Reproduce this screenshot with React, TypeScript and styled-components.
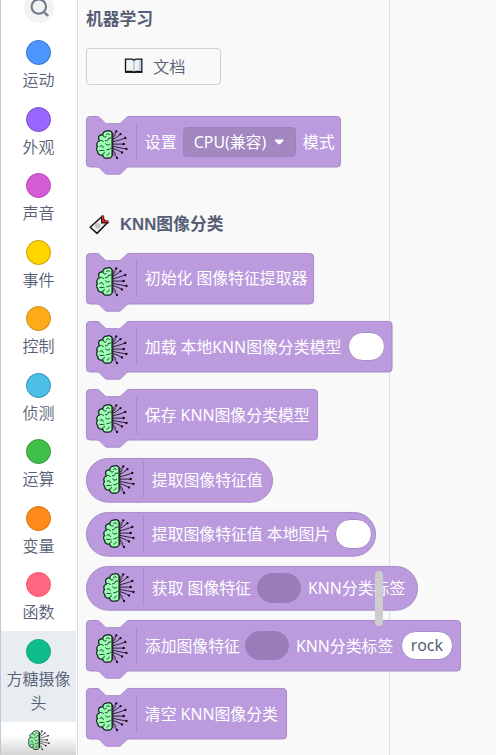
import React from 'react';
import styled, { createGlobalStyle } from 'styled-components';

const GlobalStyle = createGlobalStyle`
  * { box-sizing: border-box; }
  body { margin: 0; background: #f9f9f9; overflow: hidden; }
`;

const Screen = styled.div`
  display: flex;
  width: 496px;
  height: 755px;
  overflow: hidden;
  background: #f9f9f9;
  color: #575e75;
  font-family: 'Noto Sans', 'Noto Sans CJK SC', sans-serif;
`;

const Sidebar = styled.nav`
  position: relative;
  flex: none;
  display: flex;
  flex-direction: column;
  align-items: stretch;
  width: 77px;
  height: 755px;
  padding-right: 1px;
  border-left: 1px solid #bccbdc;
  background: #fff;
  overflow: hidden;
`;

const SearchButton = styled.div`
  flex: none;
  width: 30px;
  height: 30px;
  margin: -7px auto 9.5px 23px;
  border-radius: 50%;
  background: #f3f3f3;
`;

const Category = styled.div<{ $selected?: boolean }>`
  flex: none;
  display: flex;
  flex-direction: column;
  align-items: center;
  min-height: ${p => (p.$selected ? 91 : 66.5)}px;
  padding: 7.5px 4px 1px;
  background: ${p => (p.$selected ? '#e8edf1' : 'transparent')};
  font-family: 'Noto Sans CJK SC', sans-serif;
  font-size: 16px;
  font-weight: 350;
  line-height: 24.5px;
  text-align: center;
`;

const Bubble = styled.span<{ $color: string; $edge: string }>`
  flex: none;
  width: 25px;
  height: 25px;
  margin-bottom: 2px;
  border: 1px solid ${p => p.$edge};
  border-radius: 50%;
  background: ${p => p.$color};
`;

const CategoryName = styled.span`
  width: 66px;
`;

const BottomFade = styled.div`
  position: absolute;
  left: 0;
  right: 1px;
  bottom: 0;
  height: 20px;
  background: linear-gradient(rgba(0, 0, 0, 0), rgba(0, 0, 0, 0.17));
`;

const Flyout = styled.main`
  position: relative;
  flex: none;
  width: 313px;
  height: 755px;
  padding: 7px 0 0 8px;
  border-left: 1px solid #d9d9d9;
  border-right: 1px solid #dddddd;
`;

const Heading = styled.h2`
  display: flex;
  align-items: center;
  height: 26px;
  margin: 0;
  font: bold 16.8px/26px 'Liberation Sans', 'Noto Sans CJK SC', sans-serif;
  white-space: nowrap;
`;

const SectionHeading = styled(Heading)`
  margin: 44px 0 15px;
  gap: 10px;
  padding-left: 3px;
`;

const DocButton = styled.div`
  display: flex;
  align-items: center;
  width: 135px;
  height: 37px;
  margin: 15px 0 31px;
  padding: 0 0 1px 37px;
  gap: 9px;
  border: 1px solid #cfcfcf;
  border-radius: 4px;
  font: 350 16.3px/24px 'Noto Sans CJK SC', sans-serif;
`;

const BlockBox = styled.div<{ $w: number; $pill: boolean; $after: number }>`
  position: relative;
  display: flex;
  align-items: center;
  width: ${p => p.$w}px;
  height: ${p => (p.$pill ? 44.3 : 51.6)}px;
  margin-bottom: ${p => p.$after}px;
  padding-left: ${p => (p.$pill ? 17.2 : 10.2)}px;
`;

const BlockIcon = styled.span<{ $pill: boolean }>`
  flex: none;
  position: relative;
  padding-top: ${p => (p.$pill ? 0 : 7)}px;
`;

const Outline = styled.svg`
  position: absolute;
  left: 0;
  top: 0;
  overflow: visible;
`;

const Divider = styled.span`
  position: relative;
  flex: none;
  width: 1px;
  height: 37px;
  margin: 0 7.3px 0 8.3px;
  background: #a68bc7;
`;

const Label = styled.span<{ $w: number; $gap?: number }>`
  position: relative;
  flex: none;
  width: ${p => p.$w}px;
  margin-left: ${p => p.$gap ?? 0}px;
  color: #fff;
  font-size: 15.85px;
  line-height: 24px;
  white-space: nowrap;
`;

const Dropdown = styled.span`
  position: relative;
  flex: none;
  display: flex;
  align-items: center;
  width: 113px;
  height: 30px;
  margin: 0 7px 0 6px;
  padding-left: 10px;
  border: 1px solid #9d83bc;
  border-radius: 4px;
  background: #a287c1;
`;

const Field = styled.span<{ $w: number; $gap: number; $empty?: boolean }>`
  position: relative;
  flex: none;
  width: ${p => p.$w}px;
  height: 29.3px;
  margin-left: ${p => p.$gap}px;
  border: 1px solid ${p => (p.$empty ? '#997cb8' : '#a68bc7')};
  border-radius: 15px;
  background: ${p => (p.$empty ? '#997cb8' : '#fff')};
  color: #575e75;
  font-size: 16px;
  line-height: 27px;
  text-align: center;
`;

const ScrollThumb = styled.div`
  position: absolute;
  left: 297px;
  top: 571px;
  width: 8px;
  height: 55px;
  border-radius: 4px;
  background: #cecdce;
`;

const IconSvg = styled.svg`
  position: relative;
  flex: none;
  display: block;
`;

function Brain({ width = 32, height = 30 }: { width?: number; height?: number }) {
  return (
    <IconSvg width={width} height={height} viewBox="0 0 32 30">
      <path
        d="M16.3 3.4C15.5.8 12.8.2 10.8 1.2 8.6 1 6.6 2.6 6.8 5 4.2 4.4 1.9 6.4 2.8 9 3 10 3 10.6 3.2 11 .9 12 .1 14.6 1.5 16.5.3 18 .4 20.4 1.8 21.6 1.6 24 3.8 25.6 6.6 24.9 7 27.4 9.4 28.8 11.8 28 14 28.4 16 27 16.4 25Z"
        fill="#99ffb3" stroke="#15201a" strokeWidth="1.25" strokeLinejoin="round"
      />
      <path
        d="M6.8 5C7 6.8 8.6 7.6 10.2 6.8M10.6 4.6C11.4 3.2 13 3.4 13.6 4.4M3.2 11C4.8 9.8 6.6 10.2 7.4 11.6M9.4 10.8C11.4 11.2 12.4 9.8 12.2 8.4L14.8 8M9.6 13.8C10.4 15.6 12.4 15.4 13.6 14.4M4 16.2C5.4 15 7 15.8 7.4 17.4M3.8 20.4C5.6 21 7 19.8 8.2 20.6M10.8 19.8C12.6 20 13.4 18.8 14.4 18.4M6.6 24.9C6.6 23.6 7.4 22.8 8.6 22.8M11 25C12 25 13 24 13.2 23"
        fill="none" stroke="#1f3025" strokeWidth=".95" strokeLinecap="round"
      />
      <path d="M16.5 2.8V25.6" stroke="#2a2a2c" strokeWidth="1.9" />
      <path
        d="M17 7.2 19 5.6V3.4L20.3 1.2M17 9.4 20.4 7.4 24.3 4.3M17 11.8 23 10.2 29.3 8M17 14.1H27.7M17 16.4 24 17.8 30.7 19M17 18.6 22 20.3 25.8 22.5M17 21 19.2 23V25.4L21 28"
        fill="none" stroke="#252028" strokeWidth=".95"
      />
      <g fill="#100c14">
        <circle cx="20.3" cy="1.4" r="1.15" />
        <circle cx="24.5" cy="4.2" r="1.15" />
        <circle cx="29.3" cy="8" r="1.15" />
        <circle cx="27.7" cy="14.1" r="1.25" />
        <circle cx="30.5" cy="19" r="1.15" />
        <circle cx="26" cy="22.5" r="1.15" />
        <circle cx="21" cy="28" r="1.15" />
      </g>
    </IconSvg>
  );
}

function Book() {
  return (
    <IconSvg width="20" height="16" viewBox="0 0 20 16">
      <path d="M1.5 1.2H8L10 2.2 12 1.2H17.8V13.5H12L10 14.5 8 13.5H1.5Z" fill="#eef3f5" stroke="#111" strokeWidth="1.3" />
      <path d="M16 2V13" stroke="#b5d6ea" strokeWidth="2.2" />
      <path d="M10 2.5V14" stroke="#999" strokeWidth=".9" />
      <path d="M1 14.2H18.5" stroke="#111" strokeWidth="1.4" />
    </IconSvg>
  );
}

function Tag() {
  return (
    <IconSvg width="21" height="20" viewBox="0 0 21 20">
      <path d="M1.2 12.2 12.2 2.3 18.4 7.8 8 18.4Z" fill="#f0f0f0" stroke="#161616" strokeWidth="1.5" strokeLinejoin="round" />
      <circle cx="8.7" cy="10.8" r="2.7" fill="#c4c4c4" />
      <path d="M13.6.6V7H19.6" fill="none" stroke="#2a1111" strokeWidth="3.2" />
      <path d="M13.8 1V6.5H19" fill="none" stroke="#df2b20" strokeWidth="1.7" />
    </IconSvg>
  );
}

function Block({ width, pill = false, after, children }: { width: number; pill?: boolean; after: number; children: React.ReactNode }) {
  const w = width / 0.9;
  const r = 24.3;
  const d = pill
    ? `M${r + 0.5} .5H${w - r - 0.5}a${r} ${r} 0 0 1 0 ${2 * r}H${r + 0.5}a${r} ${r} 0 0 1 0 ${-2 * r}Z`
    : `M.5 4.5a4 4 0 0 1 4-4H12c2 0 3 1 4 2l4 4c1 1 2 2 4 2h12c2 0 3-1 4-2l4-4c1-1 2-2 4-2H${w - 4.5}a4 4 0 0 1 4 4V52.7a4 4 0 0 1-4 4H48c-2 0-3 1-4 2l-4 4c-1 1-2 2-4 2H24c-2 0-3-1-4-2l-4-4c-1-1-2-2-4-2H4.5a4 4 0 0 1-4-4Z`;
  return (
    <BlockBox $w={width} $pill={pill} $after={after}>
      <Outline width={width} height={pill ? 45 : 60}>
        <path transform="scale(.9)" d={d} fill="#bb9bde" stroke="#a68bc7" strokeWidth="1.1" />
      </Outline>
      <BlockIcon $pill={pill}>
        <Brain />
      </BlockIcon>
      <Divider />
      {children}
    </BlockBox>
  );
}

const categories = [
  { name: '运动', color: '#4c97ff', edge: '#3373cc' },
  { name: '外观', color: '#9966ff', edge: '#774dcb' },
  { name: '声音', color: '#d65cd6', edge: '#bd42bd' },
  { name: '事件', color: '#ffd500', edge: '#cc9900' },
  { name: '控制', color: '#ffab19', edge: '#cf8b17' },
  { name: '侦测', color: '#4cbfe6', edge: '#2e8eb8' },
  { name: '运算', color: '#40bf4a', edge: '#389438' },
  { name: '变量', color: '#ff8c1a', edge: '#db6e00' },
  { name: '函数', color: '#ff6680', edge: '#ff4d6a' },
  { name: '方糖摄像头', color: '#0fbd8c', edge: '#0da57a', selected: true },
];

export default function App() {
  return (
    <Screen>
      <GlobalStyle />
      <Sidebar>
        <SearchButton>
          <IconSvg width="30" height="30" viewBox="0 0 30 30" fill="none" stroke="#6f778c">
            <circle cx="14.8" cy="13.6" r="7.2" strokeWidth="2.1" />
            <path d="M20.6 19.6 24.2 23" strokeWidth="2.4" />
          </IconSvg>
        </SearchButton>
        {categories.map(c => (
          <Category key={c.name} $selected={c.selected}>
            <Bubble $color={c.color} $edge={c.edge} />
            <CategoryName>{c.name}</CategoryName>
          </Category>
        ))}
        <Category>
          <Brain width={22} height={21} />
        </Category>
        <BottomFade />
      </Sidebar>
      <Flyout>
        <Heading>机器学习</Heading>
        <DocButton>
          <Book />
          文档
        </DocButton>
        <Block width={255} after={7}>
          <Label $w={32}>设置</Label>
          <Dropdown>
            <Label $w={80}>CPU(兼容)</Label>
            <IconSvg width="11" height="9" viewBox="0 0 11 9">
              <path d="M1.5 3.2H8.9L5.9 6.2Q5.2 6.9 4.5 6.2Z" fill="#fff" stroke="#fff" strokeWidth="1.6" strokeLinejoin="round" />
            </IconSvg>
          </Dropdown>
          <Label $w={32}>模式</Label>
        </Block>
        <SectionHeading>
          <Tag />
          KNN图像分类
        </SectionHeading>
        <Block width={228} after={16.8}>
          <Label $w={163}>初始化 图像特征提取器</Label>
        </Block>
        <Block width={306.5} after={16.8}>
          <Label $w={197}>加载 本地KNN图像分类模型</Label>
          <Field $w={36.5} $gap={6.5} />
        </Block>
        <Block width={232} after={16.8}>
          <Label $w={166}>保存 KNN图像分类模型</Label>
        </Block>
        <Block width={187} pill after={9.7}>
          <Label $w={110}>提取图像特征值</Label>
        </Block>
        <Block width={290} pill after={9.7}>
          <Label $w={177}>提取图像特征值 本地图片</Label>
          <Field $w={36.5} $gap={6.7} />
        </Block>
        <Block width={332} pill after={9.7}>
          <Label $w={99}>获取 图像特征</Label>
          <Field $w={43.5} $gap={6.7} $empty />
          <Label $w={98} $gap={7}>KNN分类标签</Label>
        </Block>
        <Block width={375} after={16.8}>
          <Label $w={95}>添加图像特征</Label>
          <Field $w={43.5} $gap={5.7} $empty />
          <Label $w={98} $gap={7}>KNN分类标签</Label>
          <Field $w={52} $gap={7}>rock</Field>
        </Block>
        <Block width={201} after={0}>
          <Label $w={135}>清空 KNN图像分类</Label>
        </Block>
        <ScrollThumb />
      </Flyout>
    </Screen>
  );
}
